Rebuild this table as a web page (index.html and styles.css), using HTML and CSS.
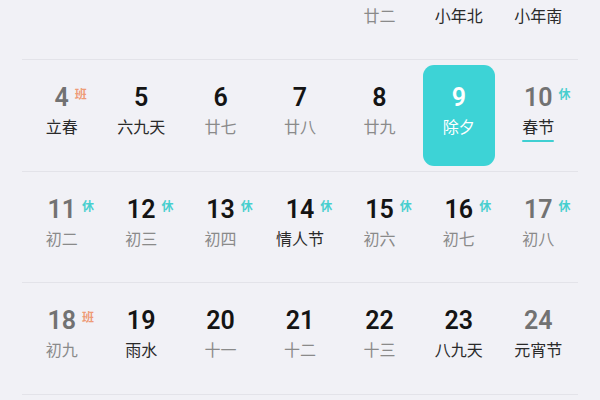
FILE: index.html
```html
<!DOCTYPE html>
<html lang="zh">
<head>
<meta charset="utf-8">
<link rel="stylesheet" href="styles.css">
</head>
<body>
<div class="calendar">
  <div class="week">
    <div class="day empty"></div>
    <div class="day empty"></div>
    <div class="day empty"></div>
    <div class="day empty"></div>
    <div class="day"><div class="inner"><span class="num"></span><span class="lunar">廿二</span></div></div>
    <div class="day"><div class="inner"><span class="num"></span><span class="lunar term">小年北</span></div></div>
    <div class="day weekend"><div class="inner"><span class="num"></span><span class="lunar term">小年南</span></div></div>
  </div>
  <div class="week">
    <div class="day weekend"><div class="inner"><span class="num">4<i class="badge work">班</i></span><span class="lunar term">立春</span></div></div>
    <div class="day"><div class="inner"><span class="num">5</span><span class="lunar term">六九天</span></div></div>
    <div class="day"><div class="inner"><span class="num">6</span><span class="lunar">廿七</span></div></div>
    <div class="day"><div class="inner"><span class="num">7</span><span class="lunar">廿八</span></div></div>
    <div class="day"><div class="inner"><span class="num">8</span><span class="lunar">廿九</span></div></div>
    <div class="day selected"><div class="inner"><span class="num">9</span><span class="lunar term">除夕</span></div></div>
    <div class="day weekend"><div class="inner"><span class="num">10<i class="badge rest">休</i></span><span class="lunar term festival">春节</span></div></div>
  </div>
  <div class="week">
    <div class="day weekend"><div class="inner"><span class="num">11<i class="badge rest">休</i></span><span class="lunar">初二</span></div></div>
    <div class="day"><div class="inner"><span class="num">12<i class="badge rest">休</i></span><span class="lunar">初三</span></div></div>
    <div class="day"><div class="inner"><span class="num">13<i class="badge rest">休</i></span><span class="lunar">初四</span></div></div>
    <div class="day"><div class="inner"><span class="num">14<i class="badge rest">休</i></span><span class="lunar term">情人节</span></div></div>
    <div class="day"><div class="inner"><span class="num">15<i class="badge rest">休</i></span><span class="lunar">初六</span></div></div>
    <div class="day"><div class="inner"><span class="num">16<i class="badge rest">休</i></span><span class="lunar">初七</span></div></div>
    <div class="day weekend"><div class="inner"><span class="num">17<i class="badge rest">休</i></span><span class="lunar">初八</span></div></div>
  </div>
  <div class="week">
    <div class="day weekend"><div class="inner"><span class="num">18<i class="badge work">班</i></span><span class="lunar">初九</span></div></div>
    <div class="day"><div class="inner"><span class="num">19</span><span class="lunar term">雨水</span></div></div>
    <div class="day"><div class="inner"><span class="num">20</span><span class="lunar">十一</span></div></div>
    <div class="day"><div class="inner"><span class="num">21</span><span class="lunar">十二</span></div></div>
    <div class="day"><div class="inner"><span class="num">22</span><span class="lunar">十三</span></div></div>
    <div class="day"><div class="inner"><span class="num">23</span><span class="lunar term">八九天</span></div></div>
    <div class="day weekend"><div class="inner"><span class="num">24</span><span class="lunar term">元宵节</span></div></div>
  </div>
</div>
</body>
</html>
```

FILE: styles.css
```css
html, body {
  margin: 0;
  padding: 0;
  background: #f1f1f6;
  overflow: hidden;
}

body {
  font-family: Roboto, "Noto Sans CJK SC", sans-serif;
  height: 400px;
}

.calendar {
  margin: -51.5px 22px 0;
}

.week {
  display: grid;
  grid-template-columns: repeat(7, 1fr);
  height: 110.5px;
  border-bottom: 1px solid #e3e3e9;
}

.day {
  padding: 5px 4px;
  display: flex;
}

.inner {
  flex: 1;
  display: flex;
  flex-direction: column;
  align-items: center;
  padding-top: 19px;
  border-radius: 11px;
}

.num {
  position: relative;
  height: 28px;
  font-size: 25px;
  line-height: 28px;
  font-weight: 600;
  color: #141414;
}

.weekend .num {
  color: #727272;
}

.badge {
  position: absolute;
  left: 100%;
  top: 4px;
  margin-left: 6px;
  font-style: normal;
  font-size: 12px;
  line-height: 14px;
  font-weight: 700;
  white-space: nowrap;
}

.badge.rest {
  color: #48cfcf;
}

.badge.work {
  color: #ee9b76;
}

.lunar {
  margin-top: 5px;
  font-size: 16px;
  line-height: 22px;
  color: #8a8a8a;
}

.lunar.term {
  color: #2a2a2a;
}

.festival {
  position: relative;
}

.festival::after {
  content: "";
  position: absolute;
  left: 0;
  right: 0;
  bottom: -3px;
  height: 2px;
  border-radius: 1px;
  background: #3fcfd2;
}

.selected .inner {
  background: #3dd3d6;
}

.selected .num,
.selected .lunar {
  color: #ffffff;
}
```
